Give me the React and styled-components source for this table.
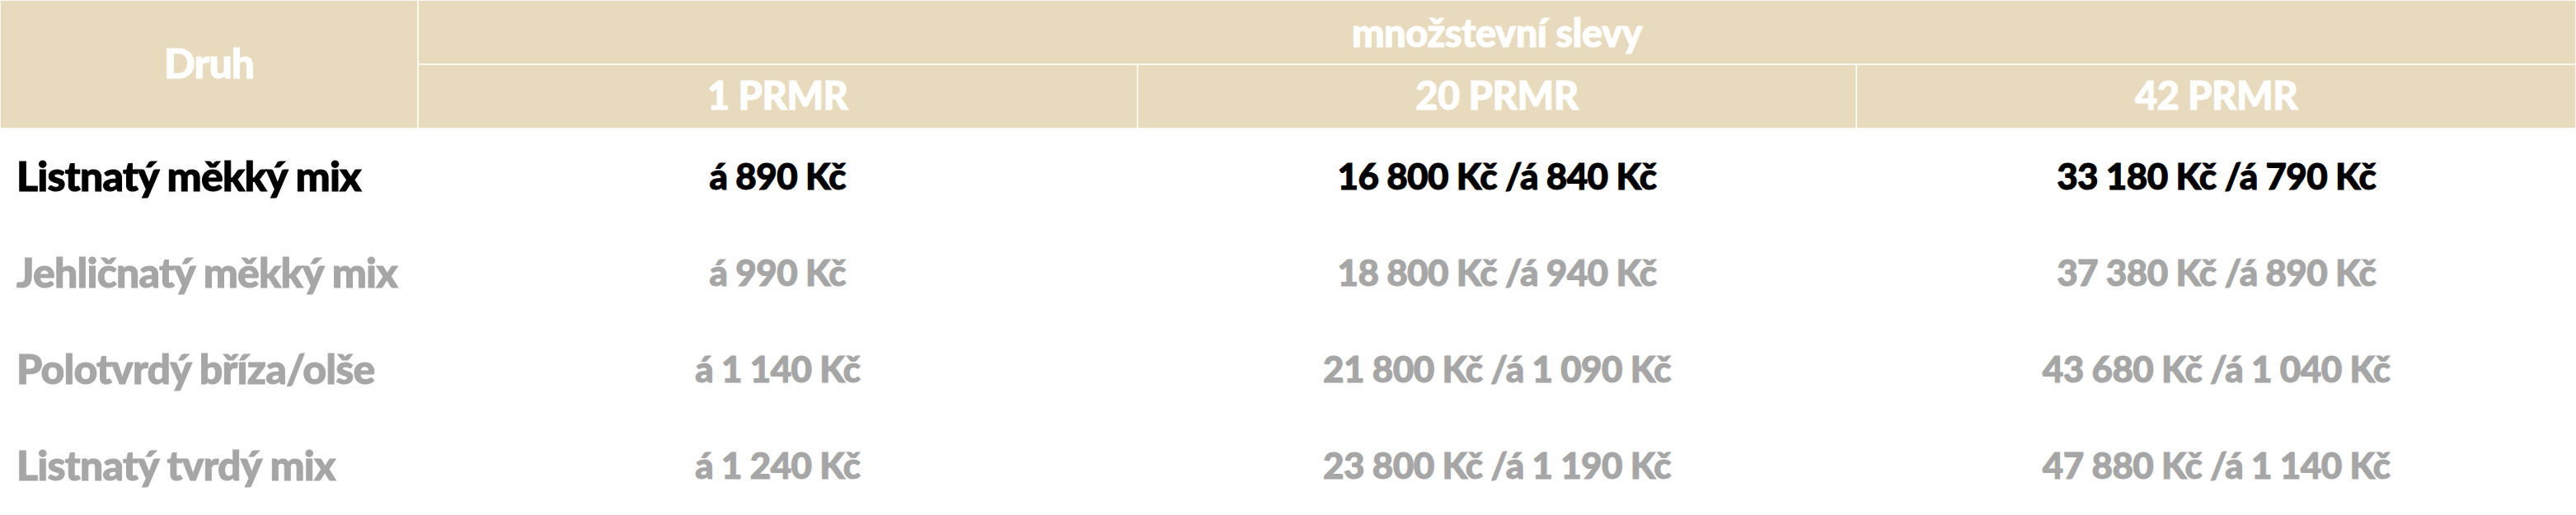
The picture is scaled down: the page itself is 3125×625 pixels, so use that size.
import styled, { createGlobalStyle } from 'styled-components';

const GlobalStyle = createGlobalStyle`
  body {
    margin: 0;
    background: #fff;
    font-family: "Lato Black", Lato, "Noto Sans", sans-serif;
  }
`;

const rows = [
  { name: 'Listnatý měkký mix', prices: ['á 890 Kč', '16 800 Kč /á 840 Kč', '33 180 Kč /á 790 Kč'] },
  { name: 'Jehličnatý měkký mix', prices: ['á 990 Kč', '18 800 Kč /á 940 Kč', '37 380 Kč /á 890 Kč'], muted: true },
  { name: 'Polotvrdý bříza/olše', prices: ['á 1 140 Kč', '21 800 Kč /á 1 090 Kč', '43 680 Kč /á 1 040 Kč'], muted: true },
  { name: 'Listnatý tvrdý mix', prices: ['á 1 240 Kč', '23 800 Kč /á 1 190 Kč', '47 880 Kč /á 1 140 Kč'], muted: true },
];

const amounts = ['1 PRMR', '20 PRMR', '42 PRMR'];

const App = () => {
  return (
    <>
      <GlobalStyle />
      <Table>
        <colgroup>
          <col style={{ width: 507 }} />
          <col />
          <col />
          <col />
        </colgroup>
        <thead>
          <tr>
            <HeadCell rowSpan={2} $big>Druh</HeadCell>
            <HeadCell colSpan={3} $lift={0}>množstevní slevy</HeadCell>
          </tr>
          <tr>
            {amounts.map((a) => (
              <HeadCell key={a} $lift={4}>{a}</HeadCell>
            ))}
          </tr>
        </thead>
        <tbody>
          {rows.map((r) => (
            <Row key={r.name} $muted={r.muted}>
              <NameCell>{r.name}</NameCell>
              {r.prices.map((p) => (
                <PriceCell key={p}>{p}</PriceCell>
              ))}
            </Row>
          ))}
        </tbody>
      </Table>
    </>
  );
};

const Table = styled.table`
  width: 3125px;
  table-layout: fixed;
  border-collapse: separate;
  border-spacing: 0;
`;

const HeadCell = styled.th`
  box-sizing: border-box;
  height: 78px;
  padding: 0 0 ${(p) => (p.$big ? 4 : p.$lift)}px;
  border: 1px solid #fbf8f1;
  background: #e8dabd;
  color: #fff;
  font-weight: 900;
  font-size: ${(p) => (p.$big ? '50px' : '47px')};
  letter-spacing: ${(p) => (p.$big ? '-1px' : '-0.5px')};
  -webkit-text-stroke: 1px #fff;
  line-height: 1;
  text-align: center;
  vertical-align: middle;
`;

const Row = styled.tr`
  height: 117px;
  color: ${(p) => (p.$muted ? '#a6a6a6' : '#000')};
`;

const NameCell = styled.td`
  padding: 0 0 4px 20px;
  font-size: 50px;
  font-weight: 900;
  letter-spacing: -0.8px;
  -webkit-text-stroke: 1px currentColor;
  text-align: left;
  vertical-align: middle;
  white-space: nowrap;
`;

const PriceCell = styled.td`
  padding: 0 0 4px;
  font-size: 44px;
  font-weight: 900;
  letter-spacing: -0.6px;
  -webkit-text-stroke: 1px currentColor;
  text-align: center;
  vertical-align: middle;
  white-space: nowrap;
`;

export default App;
